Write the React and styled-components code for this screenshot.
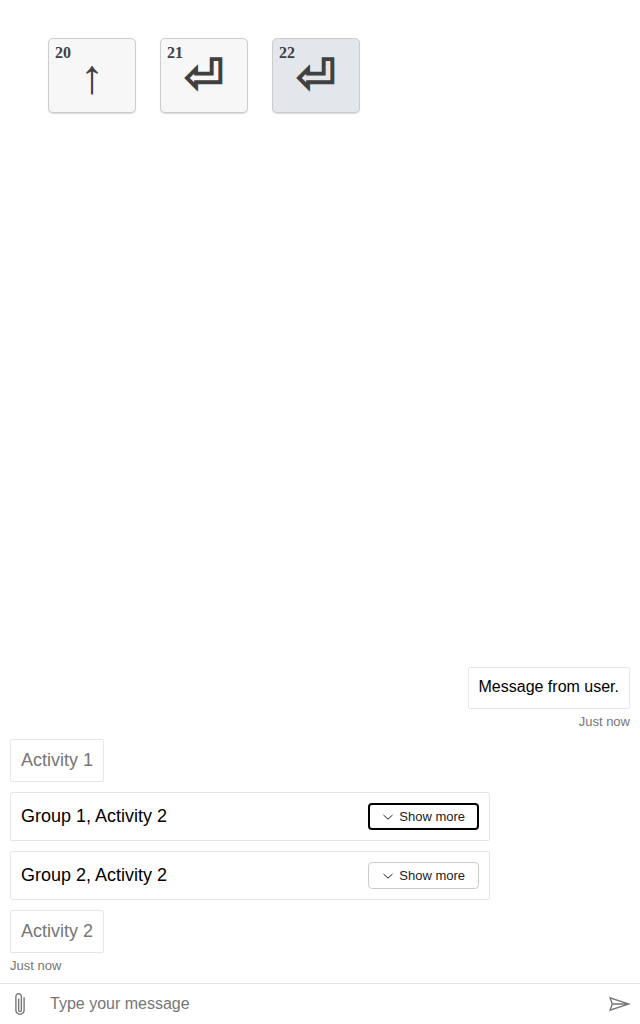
import React from 'react';
import styled, { createGlobalStyle } from 'styled-components';

const GlobalStyle = createGlobalStyle`
  *, *::before, *::after { box-sizing: border-box; }
  body {
    margin: 0;
    background: #fff;
    color: #000;
    font: 16px/20px "Liberation Sans", Arial, sans-serif;
  }
`;

const Page = styled.main`
  display: flex;
  flex-direction: column;
  min-height: 100vh;
`;

const KeyHistory = styled.ul`
  display: flex;
  gap: 24px;
  margin: 0;
  padding: 38px 48px 0;
  list-style: none;
`;

const Key = styled.li`
  display: flex;
  flex-direction: column;
  width: 88px;
  height: 75px;
  padding: 6px;
  border: 1px solid #ccc;
  border-radius: 5px;
  background: ${({ $active }) => ($active ? '#e3e6eb' : '#f7f7f7')};
  box-shadow: 0 1px 1px rgba(0, 0, 0, 0.15);
  color: #404040;
  font-family: "Liberation Serif", serif;
  font-weight: bold;
`;

const KeyIndex = styled.span`
  font-size: 16px;
  line-height: 16px;
`;

const KeyGlyph = styled.span`
  text-align: center;
  font-size: 48px;
  line-height: 32px;
`;

const Transcript = styled.section`
  display: flex;
  flex: 1;
  flex-direction: column;
  justify-content: flex-end;
  padding: 10px;
`;

const UserTurn = styled.div`
  display: flex;
  flex-direction: column;
  align-items: flex-end;
  margin-bottom: 10px;
`;

const BotTurn = styled.div`
  display: flex;
  flex-direction: column;
  align-items: flex-start;
  gap: 10px;
`;

const Bubble = styled.div`
  padding: 10px;
  border: 1px solid #e6e6e6;
  border-radius: 2px;
  background: #fff;
`;

const Message = styled.p`
  min-height: 20px;
  margin: 0;
  line-height: 18px;
`;

const Activity = styled(Bubble)`
  color: #767676;
  font-size: 18px;
  line-height: 21px;
`;

const Group = styled(Bubble)`
  display: flex;
  align-items: center;
  justify-content: space-between;
  width: 100%;
  max-width: 480px;
  font-size: 18px;
  line-height: 21px;
`;

const ShowMore = styled.button`
  display: flex;
  align-items: center;
  gap: 5px;
  height: 27px;
  padding: 0 ${({ $focused }) => ($focused ? 12 : 13)}px;
  border: ${({ $focused }) => ($focused ? '2px solid #000' : '1px solid #ccc')};
  border-radius: 4px;
  background: #fff;
  color: #222;
  font: 13px/15px "Liberation Sans", Arial, sans-serif;
  cursor: pointer;
`;

const Timestamp = styled.time`
  color: #767676;
  font-size: 13px;
  line-height: 15px;
`;

const UserTimestamp = styled(Timestamp)`
  margin-top: 5px;
`;

const BotTimestamp = styled(Timestamp)`
  margin-top: -5px;
`;

const SendBox = styled.form`
  display: flex;
  height: 41px;
  border-top: 1px solid #e6e6e6;
`;

const IconButton = styled.button`
  display: flex;
  align-items: center;
  justify-content: center;
  width: 40px;
  padding: 0;
  border: 0;
  background: transparent;
  color: #767676;
  cursor: pointer;
`;

const MessageInput = styled.input`
  flex: 1;
  min-width: 0;
  padding: 10px;
  border: 0;
  background: transparent;
  font: inherit;
  outline: 0;

  &::placeholder {
    color: #767676;
    opacity: 1;
  }
`;

const keys = [
  { index: 20, glyph: '↑' },
  { index: 21, glyph: '⏎' },
  { index: 22, glyph: '⏎', active: true },
];

const ChevronIcon = () => (
  <svg width="12" height="12" viewBox="0 0 12 12" fill="none" stroke="currentColor" aria-hidden="true">
    <path d="M1.5 4 6 8.2 10.5 4" />
  </svg>
);

const AttachmentIcon = () => (
  <svg width="28" height="28" viewBox="0 0 25.75 46" fill="currentColor" aria-hidden="true">
    <path d="M20.75 11.75v21.37a7.69 7.69 0 0 1-.62 3.07 7.95 7.95 0 0 1-4.19 4.19 7.89 7.89 0 0 1-6.13 0 7.95 7.95 0 0 1-4.19-4.19 7.69 7.69 0 0 1-.62-3.07v-22.5a5.27 5.27 0 0 1 .45-2.17 5.69 5.69 0 0 1 3-3 5.48 5.48 0 0 1 4.35 0 5.69 5.69 0 0 1 3 3 5.27 5.27 0 0 1 .45 2.17v22.5a3.41 3.41 0 0 1-.26 1.32 3.31 3.31 0 0 1-1.8 1.8 3.46 3.46 0 0 1-2.63 0 3.31 3.31 0 0 1-1.8-1.8 3.41 3.41 0 0 1-.26-1.32V14h2.25v19.12a1.13 1.13 0 1 0 2.25 0v-22.5a3.41 3.41 0 0 0-.26-1.32 3.31 3.31 0 0 0-1.8-1.8 3.46 3.46 0 0 0-2.63 0 3.31 3.31 0 0 0-1.8 1.8 3.41 3.41 0 0 0-.26 1.32v22.5a5.32 5.32 0 0 0 .45 2.18 5.69 5.69 0 0 0 3 3 5.48 5.48 0 0 0 4.35 0 5.69 5.69 0 0 0 3-3 5.32 5.32 0 0 0 .45-2.18V11.75z" />
  </svg>
);

const SendIcon = () => (
  <svg width="28" height="28" viewBox="0 0 45.7 33.8" fill="currentColor" aria-hidden="true">
    <path fillRule="evenodd" d="M8.55 25.25l21.67-7.25H11zm2.41-9.47h19.26l-21.67-7.23zm-6 13l4-11.9L5 5l35.7 11.9z" />
  </svg>
);

const ActivityGroup = ({ title, focused }) => (
  <Group>
    <span>{title}</span>
    <ShowMore type="button" $focused={focused}>
      <ChevronIcon />
      Show more
    </ShowMore>
  </Group>
);

export default function App() {
  return (
    <Page>
      <GlobalStyle />
      <KeyHistory>
        {keys.map(({ index, glyph, active }) => (
          <Key key={index} $active={active}>
            <KeyIndex>{index}</KeyIndex>
            <KeyGlyph>{glyph}</KeyGlyph>
          </Key>
        ))}
      </KeyHistory>
      <Transcript>
        <UserTurn>
          <Bubble>
            <Message>Message from user.</Message>
          </Bubble>
          <UserTimestamp>Just now</UserTimestamp>
        </UserTurn>
        <BotTurn>
          <Activity>Activity 1</Activity>
          <ActivityGroup title="Group 1, Activity 2" focused />
          <ActivityGroup title="Group 2, Activity 2" />
          <Activity>Activity 2</Activity>
          <BotTimestamp>Just now</BotTimestamp>
        </BotTurn>
      </Transcript>
      <SendBox onSubmit={(event) => event.preventDefault()}>
        <IconButton type="button" aria-label="Upload file">
          <AttachmentIcon />
        </IconButton>
        <MessageInput type="text" aria-label="Message" placeholder="Type your message" />
        <IconButton type="submit" aria-label="Send">
          <SendIcon />
        </IconButton>
      </SendBox>
    </Page>
  );
}
